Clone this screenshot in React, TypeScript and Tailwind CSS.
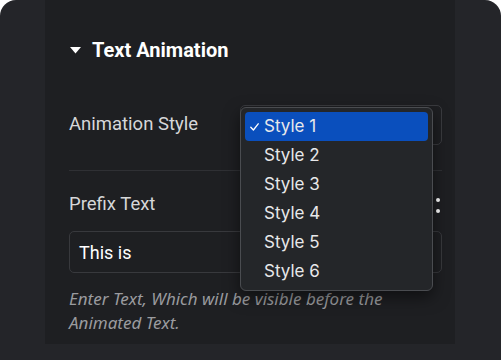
import React from 'react';

const styles = ['Style 1', 'Style 2', 'Style 3', 'Style 4', 'Style 5', 'Style 6'];

const App: React.FC = () => {
  const [selected] = React.useState('Style 1');

  return (
    <div className="w-[501px] h-[360px] bg-white overflow-hidden">
      <div className="w-full h-full bg-[#242529] rounded-t-2xl pl-[45px] pr-[46px] pb-4">
        <div className="relative h-full bg-[#1e1f22] pl-6 pr-[13px] pt-[38px] font-['Roboto',sans-serif]">
          {/* section heading */}
          <div className="flex items-center gap-[11px] h-6">
            <svg width="11" height="7" viewBox="0 0 11 7" className="ml-[1px]">
              <path d="M0 0 H11 L5.5 6.5 Z" fill="#ffffff" />
            </svg>
            <span className="text-[20px] font-bold text-white">Text Animation</span>
          </div>

          {/* animation style row */}
          <div className="flex items-center justify-between mt-[43px] h-10">
            <span className="text-[18.5px] text-[#d6d7d9]">Animation Style</span>
            <div className="w-[202px] h-10 rounded-[5px] border border-[#3a3b3f]" />
          </div>

          <div className="mt-[25px] h-px bg-[#2f3034]" />

          {/* prefix text */}
          <div className="flex items-center justify-between mt-[22px] h-6">
            <span className="text-[18.5px] text-[#d6d7d9]">Prefix Text</span>
            <div className="flex flex-col items-center gap-[7px] mr-[2px]">
              <span className="w-[4px] h-[4px] rounded-full bg-white" />
              <span className="w-[4px] h-[4px] rounded-full bg-white" />
            </div>
          </div>
          <div className="mt-[14px] h-[42px] rounded-[5px] border border-[#38393d] flex items-center px-[9px]">
            <span className="text-[18px] text-white">This is</span>
          </div>
          <p className="mt-[14px] text-[17px] leading-6 italic text-[#9a9b9f] w-[340px] font-['Noto_Sans',sans-serif]">
            Enter Text, Which will be visible before the Animated Text.
          </p>

          {/* open dropdown menu */}
          <div className="absolute left-[195px] top-[107px] w-[193px] rounded-[6px] bg-[#242629] border border-[#4a4c50] shadow-[0_6px_16px_rgba(0,0,0,0.5)] p-[4px] font-['Inter',sans-serif]">
            {styles.map((s) => (
              <div
                key={s}
                className={`flex items-center h-[29px] rounded-[4px] pl-[5px] ${s === selected ? 'bg-[#0a4fbd]' : ''}`}
              >
                <span className="w-[14px] flex items-center">
                  {s === selected && (
                    <svg width="9" height="8" viewBox="0 0 9 8">
                      <path d="M0.8 4.2 L3.4 7 L8.2 0.8" fill="none" stroke="#ffffff" strokeWidth="1.3" strokeLinecap="round" strokeLinejoin="round" />
                    </svg>
                  )}
                </span>
                <span className="text-[17px] text-[#e8e8ea]">{s}</span>
              </div>
            ))}
          </div>
        </div>
      </div>
    </div>
  );
};

export default App;
